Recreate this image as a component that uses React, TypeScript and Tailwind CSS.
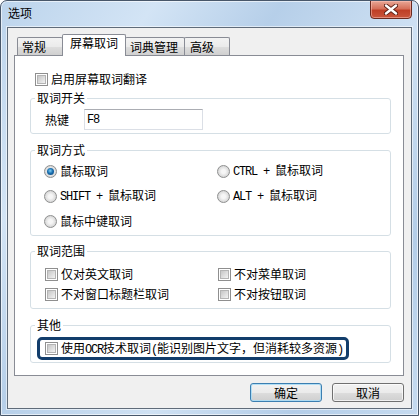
import React from "react";

const mono = "font-['Liberation_Mono',monospace] tracking-[-1.2px]";

function Check() {
  return (
    <span className="flex h-[13px] w-[13px] shrink-0 items-center justify-center border border-[#8f8f8f] bg-white">
      <span className="h-[9px] w-[9px] border border-[#b4b4b4] bg-[linear-gradient(135deg,#c6c6c6,#f2f2f2)]" />
    </span>
  );
}

function Radio({ checked }: { checked?: boolean }) {
  return (
    <span className="flex h-[13px] w-[13px] shrink-0 items-center justify-center rounded-full border border-[#8e8f8f] bg-[radial-gradient(circle_at_50%_50%,#f6f6f6_25%,#c4c4c4_100%)]">
      {checked && (
        <span className="h-[7px] w-[7px] rounded-full bg-[radial-gradient(circle_at_45%_40%,#7fd0f5_0%,#1a6fb0_45%,#0b3f70_100%)]" />
      )}
    </span>
  );
}

function Item({
  kind,
  checked,
  children,
}: {
  kind: "check" | "radio";
  checked?: boolean;
  children: React.ReactNode;
}) {
  return (
    <div className="flex h-[16px] items-center gap-[3px] whitespace-pre">
      {kind === "check" ? <Check /> : <Radio checked={checked} />}
      <span>{children}</span>
    </div>
  );
}

function Group({
  title,
  className,
  children,
}: {
  title: string;
  className?: string;
  children: React.ReactNode;
}) {
  return (
    <fieldset
      className={
        "ml-[15px] w-[361px] rounded-[3px] border border-[#d5dfe5] " +
        (className ?? "")
      }
    >
      <legend className="ml-[4px] px-[2px] text-[12px] leading-[14px]">
        {title}
      </legend>
      {children}
    </fieldset>
  );
}

export default function App() {
  return (
    <div className="relative h-[416px] w-[419px] overflow-hidden rounded-t-[7px] border border-[#48576a] bg-[linear-gradient(125deg,#bcd4ec_0%,#d3e4f5_22%,#b6cfe9_40%,#cfe1f3_62%,#b3cde8_82%,#c6dbf0_100%)] font-['Noto_Sans_CJK_SC','Noto_Sans',sans-serif] text-[12px] leading-[16px] text-black shadow-[inset_0_0_0_1px_rgba(255,255,255,0.6)]">
      {/* title bar */}
      <div className="flex h-[26px] items-center pb-[2px] pl-[7px]">
        <span>选项</span>
      </div>

      {/* close button */}
      <div className="absolute right-[6px] top-[-1px] flex h-[19px] w-[42px] items-center justify-center rounded-b-[4px] border border-[#6b2a1f] bg-[linear-gradient(180deg,#e8a796_0%,#d5705a_45%,#bf3f26_55%,#c9563c_100%)] shadow-[inset_0_0_0_1px_rgba(255,200,190,0.5)]">
        <svg width="14" height="11" viewBox="0 0 14 11">
          <path
            d="M2 1.5 L12 9.5 M12 1.5 L2 9.5"
            stroke="#5a1e14"
            strokeWidth="4.2"
            strokeLinecap="round"
            fill="none"
          />
          <path
            d="M2 1.5 L12 9.5 M12 1.5 L2 9.5"
            stroke="#ffffff"
            strokeWidth="2.4"
            strokeLinecap="round"
            fill="none"
          />
        </svg>
      </div>

      {/* client area */}
      <div className="mx-[6px] h-[382px] border border-[#5f6b79] bg-[#f0f0f0] pl-[6px] pt-[6px] shadow-[0_0_0_1px_rgba(255,255,255,0.55)]">
        {/* tabs */}
        <div className="relative z-10 flex h-[21px] items-end pl-[3px]">
          <div className="h-[18px] w-[46px] rounded-t-[2px] border-x border-t border-[#898c95] bg-[linear-gradient(180deg,#f3f3f3_0%,#ebebeb_50%,#dedede_51%,#d0d0d0_100%)] pl-[4px] pt-px">
            常规
          </div>
          <div className="-mb-px -ml-px h-[22px] w-[64px] rounded-t-[2px] border-x border-t border-[#898c95] bg-white pl-[7px]">
            屏幕取词
          </div>
          <div className="-ml-px h-[18px] w-[60px] rounded-t-[2px] border-x border-t border-[#898c95] bg-[linear-gradient(180deg,#f3f3f3_0%,#ebebeb_50%,#dedede_51%,#d0d0d0_100%)] pl-[4px] pt-px">
            词典管理
          </div>
          <div className="-ml-px h-[18px] w-[46px] rounded-t-[2px] border-x border-t border-[#898c95] bg-[linear-gradient(180deg,#f3f3f3_0%,#ebebeb_50%,#dedede_51%,#d0d0d0_100%)] pl-[5px] pt-px">
            高级
          </div>
        </div>

        {/* panel */}
        <div className="h-[321px] w-[390px] border border-[#898c95] bg-white">
          <div className="ml-[20px] mt-[15px]">
            <Item kind="check">启用屏幕取词翻译</Item>
          </div>

          <Group title="取词开关" className="mt-[4px]">
            <div className="flex items-center pb-[3px] pl-[14px] pt-[4px]">
              <span>热键</span>
              <div
                className={
                  "ml-[15px] flex h-[21px] w-[119px] items-center border border-[#dbdfe6] border-t-[#abadb3] pl-[2px] " +
                  mono
                }
              >
                F8
              </div>
            </div>
          </Group>

          <Group title="取词方式" className="mt-[9px]">
            <div className="grid grid-cols-[173px_1fr] gap-y-[9px] pb-[6px] pl-[13px] pt-[6px]">
              <Item kind="radio" checked>
                鼠标取词
              </Item>
              <Item kind="radio">
                <span className={mono}>CTRL + </span>鼠标取词
              </Item>
              <Item kind="radio">
                <span className={mono}>SHIFT + </span>鼠标取词
              </Item>
              <Item kind="radio">
                <span className={mono}>ALT + </span>鼠标取词
              </Item>
              <Item kind="radio">鼠标中键取词</Item>
            </div>
          </Group>

          <Group title="取词范围" className="mt-[8px]">
            <div className="grid grid-cols-[173px_1fr] gap-y-[4px] pb-[6px] pl-[14px] pt-[8px]">
              <Item kind="check">仅对英文取词</Item>
              <Item kind="check">不对菜单取词</Item>
              <Item kind="check">不对窗口标题栏取词</Item>
              <Item kind="check">不对按钮取词</Item>
            </div>
          </Group>

          <Group title="其他" className="mt-[9px]">
            <div className="pb-[2px] pl-[6px] pt-[5px]">
              <div className="flex h-[23px] w-[312px] items-center gap-[3px] rounded-[5px] border-[3px] border-[#123d6b] pl-[5px] whitespace-pre">
                <Check />
                <span>
                  使用<span className={mono}>OCR</span>技术取词
                  <span className={mono}>(</span>能识别图片文字，但消耗较多资源
                  <span className={mono}>)</span>
                </span>
              </div>
            </div>
          </Group>
        </div>

        {/* buttons */}
        <div className="mt-[7px] flex justify-end gap-[10px] pr-[7px]">
          <button className="flex h-[19px] w-[72px] items-center justify-center rounded-[3px] border border-[#3c7fb1] bg-[linear-gradient(180deg,#f2f2f2_0%,#ebebeb_50%,#dddddd_51%,#cfcfcf_100%)] shadow-[inset_0_0_0_1px_rgba(170,220,245,0.9)]">
            确定
          </button>
          <button className="flex h-[19px] w-[72px] items-center justify-center rounded-[3px] border border-[#707070] bg-[linear-gradient(180deg,#f2f2f2_0%,#ebebeb_50%,#dddddd_51%,#cfcfcf_100%)] shadow-[inset_0_0_0_1px_rgba(255,255,255,0.7)]">
            取消
          </button>
        </div>
      </div>
    </div>
  );
}
